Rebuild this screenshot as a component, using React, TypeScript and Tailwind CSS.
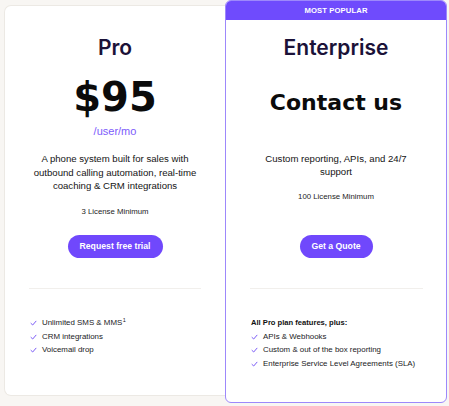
import React from "react";

const HEAD = { fontFamily: '"DejaVu Sans", sans-serif' };
const TITLE = { fontFamily: 'Inter, "DejaVu Sans", sans-serif' };
const BODY = { fontFamily: '"Liberation Sans", Arial, sans-serif' };

function Check() {
  return (
    <svg width="7" height="6" viewBox="0 0 7 6" className="shrink-0">
      <polyline points="1,3.4 2.7,5 6,1.2" fill="none" stroke="#7b5cf6" strokeWidth="1" strokeLinecap="round" strokeLinejoin="round" />
    </svg>
  );
}

function Feature({ children }: { children: React.ReactNode }) {
  return (
    <li className="flex items-center gap-[5px] h-[13.7px] leading-[13.7px] text-[7.9px] text-[#1a1a1c]">
      <Check />
      <span>{children}</span>
    </li>
  );
}

export default function App() {
  return (
    <div className="w-[449px] h-[406px] bg-[#f8f6f3] flex items-start overflow-hidden" style={BODY}>
      {/* Pro card */}
      <div className="ml-[4px] mt-[5px] w-[221px] h-[391px] bg-white border border-r-0 border-[#ece9e4] rounded-l-[7px] flex flex-col items-center pt-[30px] px-[24px]">
        <div className="text-[21px] leading-[24px] font-semibold text-[#1b1238]" style={TITLE}>Pro</div>
        <div className="mt-[17px] text-[40px] leading-[40px] font-bold text-[#0b0b0b]" style={HEAD}>$95</div>
        <div className="mt-[7px] text-[11px] leading-[14px] text-[#7c5cfb]">/user/mo</div>
        <p className="mt-[14px] w-[172px] text-center text-[9.6px] leading-[13.5px] text-[#141414]">
          A phone system built for sales with outbound calling automation, real-time coaching &amp; CRM integrations
        </p>
        <div className="mt-[14px] text-[7.8px] leading-[10px] text-[#1c1c1c]">3 License Minimum</div>
        <button className="mt-[18.5px] w-[95px] h-[23px] rounded-full bg-[#7048fc] text-white text-[8.7px] font-bold flex items-center justify-center">
          Request free trial
        </button>
        <div className="mt-[30px] w-full h-px bg-[#f1efec]" />
        <ul className="mt-[27px] w-full pl-[1px] flex flex-col">
          <Feature>
            Unlimited SMS &amp; MMS<span className="relative -top-[3px] text-[5.5px] ml-[0.5px]">1</span>
          </Feature>
          <Feature>CRM integrations</Feature>
          <Feature>Voicemail drop</Feature>
        </ul>
      </div>

      {/* Enterprise card */}
      <div className="w-[222px] h-[403px] bg-white border border-[#9d88fb] rounded-[6px] overflow-hidden flex flex-col items-center">
        <div className="w-full h-[19px] shrink-0 bg-[#6f4bfd] flex items-center justify-center text-white text-[7.7px] font-bold tracking-[0.1px]">
          MOST POPULAR
        </div>
        <div className="mt-[16px] text-[21px] leading-[24px] font-semibold text-[#1b1238]" style={TITLE}>Enterprise</div>
        <div className="mt-[29.5px] text-[22px] leading-[26px] font-bold text-[#0b0b0b]" style={HEAD}>Contact us</div>
        <p className="mt-[36.3px] w-[172px] text-center text-[9.6px] leading-[13.5px] text-[#141414]">
          Custom reporting, APIs, and 24/7 support
        </p>
        <div className="mt-[13.7px] text-[7.8px] leading-[10px] text-[#1c1c1c]">100 License Minimum</div>
        <button className="mt-[32.5px] w-[73px] h-[23px] rounded-full bg-[#7048fc] text-white text-[8.7px] font-bold flex items-center justify-center">
          Get a Quote
        </button>
        <div className="mt-[30px] w-[173px] h-px bg-[#f1efec]" />
        <div className="mt-[27px] w-[173px] pl-[1.5px]">
          <div className="h-[13.7px] leading-[13.7px] text-[7.6px] font-bold text-[#111]">All Pro plan features, plus:</div>
          <ul className="flex flex-col">
            <Feature>APIs &amp; Webhooks</Feature>
            <Feature>Custom &amp; out of the box reporting</Feature>
            <Feature>Enterprise Service Level Agreements (SLA)</Feature>
          </ul>
        </div>
      </div>
    </div>
  );
}
